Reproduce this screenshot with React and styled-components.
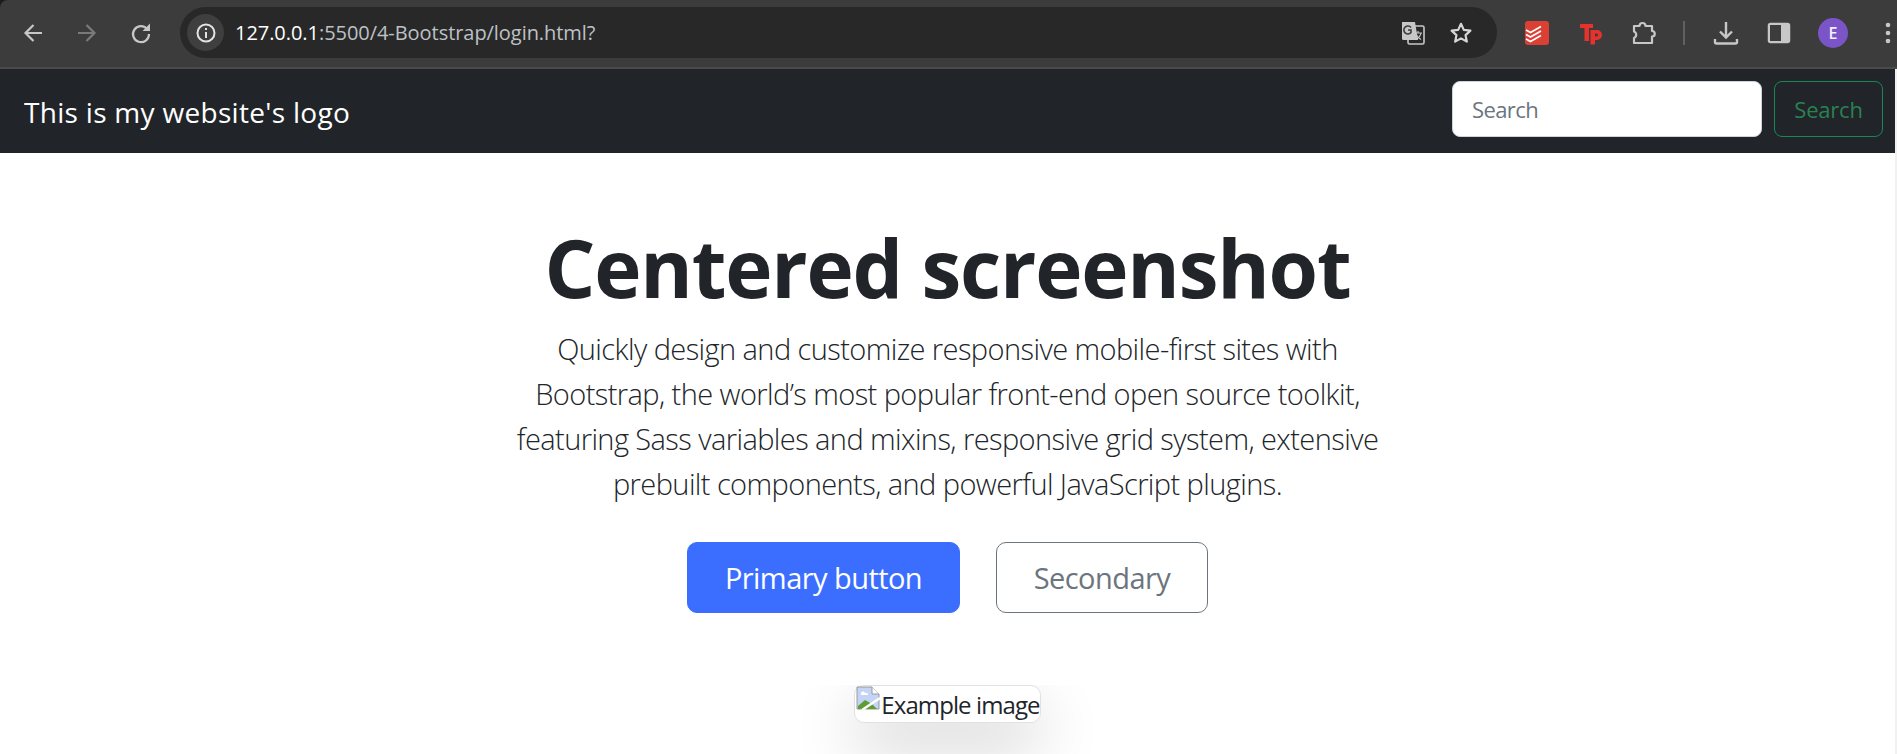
import React from 'react';
import styled, { createGlobalStyle } from 'styled-components';

const uiFont = `"Open Sans", "Noto Sans", "Liberation Sans", sans-serif`;

const GlobalStyle = createGlobalStyle`
  html, body {
    margin: 0;
    padding: 0;
    background: #fff;
    overflow: hidden;
  }
  * {
    box-sizing: border-box;
  }
`;

const Page = styled.div`
  width: 1897px;
  height: 754px;
  overflow: hidden;
  display: flex;
  flex-direction: column;
  background: #1c1c1c;
  font-family: ${uiFont};
  color: #212529;
`;

const BrowserBar = styled.div`
  height: 69px;
  flex: none;
  display: flex;
  align-items: center;
  background: #3c3c3c;
  border-bottom: 2px solid #4a4a4a;
  border-top-left-radius: 8px;
  padding: 0 0 2px 14px;
`;

const NavButton = styled.div`
  width: 38px;
  height: 38px;
  flex: none;
  margin-right: ${(p) => p.$gap}px;
  display: flex;
  align-items: center;
  justify-content: center;
  opacity: ${(p) => (p.$dim ? 0.45 : 1)};
`;

const Omnibox = styled.div`
  width: 1317px;
  height: 51px;
  flex: none;
  display: flex;
  align-items: center;
  background: #282828;
  border-radius: 26px;
  padding: 0 22px 0 7px;
`;

const InfoChip = styled.div`
  width: 37px;
  height: 37px;
  flex: none;
  border-radius: 50%;
  background: #3f3f3f;
  display: flex;
  align-items: center;
  justify-content: center;
`;

const UrlText = styled.div`
  flex: 1;
  margin-left: 11px;
  font-size: 20px;
  letter-spacing: -0.05px;
  color: #bdc1c6;
  white-space: nowrap;
`;

const UrlHost = styled.span`
  color: #fff;
`;

const OmniIcon = styled.div`
  width: 28px;
  height: 28px;
  flex: none;
  margin-left: ${(p) => p.$gap}px;
  display: flex;
  align-items: center;
  justify-content: center;
`;

const ExtensionArea = styled.div`
  display: flex;
  align-items: center;
  margin-left: 27px;
`;

const ExtIcon = styled.div`
  width: 26px;
  height: 26px;
  flex: none;
  margin-right: ${(p) => p.$gap}px;
  display: flex;
  align-items: center;
  justify-content: center;
`;

const Divider = styled.div`
  width: 2px;
  height: 24px;
  flex: none;
  background: #5f6060;
  margin-right: 28px;
`;

const Avatar = styled.div`
  width: 30px;
  height: 30px;
  flex: none;
  border-radius: 50%;
  background: #7b55c7;
  color: #f3eefc;
  font-size: 16px;
  font-weight: 600;
  display: flex;
  align-items: center;
  justify-content: center;
  margin-right: 36px;
`;

const Body = styled.div`
  flex: 1;
  min-height: 0;
  display: flex;
  background: #fff;
`;

const Content = styled.div`
  flex: 1;
  min-width: 0;
  display: flex;
  flex-direction: column;
  overflow: hidden;
`;

const ScrollTrack = styled.div`
  width: 2px;
  flex: none;
  background: #f1f1f1;
`;

const Navbar = styled.nav`
  height: 84px;
  flex: none;
  display: flex;
  align-items: center;
  justify-content: space-between;
  background: #212529;
  padding: 0 12px 0 24px;
`;

const Brand = styled.a`
  color: #fff;
  font-size: 28px;
  letter-spacing: 0.3px;
  padding-top: 2px;
`;

const SearchForm = styled.form`
  display: flex;
  gap: 12px;
  margin-bottom: 4px;
`;

const SearchInput = styled.input`
  width: 310px;
  height: 56px;
  border: 1px solid #ced4da;
  border-radius: 8px;
  background: #fff;
  padding: 0 19px;
  font-family: ${uiFont};
  font-size: 22px;
  letter-spacing: -0.6px;
  outline: none;
  &::placeholder {
    color: #6c757d;
    opacity: 1;
  }
`;

const SearchButton = styled.button`
  width: 109px;
  height: 56px;
  border: 1px solid #198754;
  border-radius: 8px;
  background: transparent;
  color: #2a8152;
  font-family: ${uiFont};
  font-size: 22px;
  letter-spacing: -0.2px;
  padding: 0;
`;

const Hero = styled.main`
  flex: 1;
  display: flex;
  flex-direction: column;
  align-items: center;
  padding-top: 66px;
  min-height: 0;
`;

const Heading = styled.h1`
  margin: 0;
  font-size: 80px;
  line-height: 96px;
  font-weight: 700;
  letter-spacing: -1.2px;
`;

const Lead = styled.p`
  margin: 11px 0 0;
  width: 880px;
  text-align: center;
  font-size: 29px;
  line-height: 45px;
  font-weight: 300;
  letter-spacing: -0.58px;
`;

const ButtonRow = styled.div`
  display: flex;
  gap: 36px;
  margin-top: 36px;
`;

const HeroButton = styled.button`
  height: 71px;
  width: ${(p) => p.$width}px;
  border-radius: 10px;
  border: 1px solid ${(p) => (p.$primary ? '#3b6eff' : '#6c757d')};
  background: ${(p) => (p.$primary ? '#3b6eff' : '#fff')};
  color: ${(p) => (p.$primary ? '#fff' : '#6c757d')};
  font-family: ${uiFont};
  font-size: 29px;
  letter-spacing: -0.55px;
  padding: 0;
`;

const Preview = styled.div`
  margin-top: 72px;
  flex: none;
  display: flex;
  align-items: center;
  height: 38px;
  border: 1px solid #dee2e6;
  border-radius: 10px;
  background: #fff;
  box-shadow: 0 24px 64px rgba(0, 0, 0, 0.2);
  clip-path: inset(0 -200px -200px -200px);
  font-size: 24px;
  letter-spacing: -0.9px;
  color: #212529;
  white-space: nowrap;
`;

const BrokenIcon = styled.svg`
  width: 24px;
  height: 24px;
  flex: none;
  align-self: flex-start;
  margin: 0 1px;
`;

export default function App() {
  return (
    <>
      <GlobalStyle />
      <Page>
        <BrowserBar>
          <NavButton $gap={16}>
            <svg width="24" height="24" viewBox="0 0 24 24" fill="none" stroke="#c7c7c7" strokeWidth="2.2">
              <path d="M21 12H4.500M12.500 4l-8 8 8 8" />
            </svg>
          </NavButton>
          <NavButton $gap={16} $dim>
            <svg width="24" height="24" viewBox="0 0 24 24" fill="none" stroke="#c7c7c7" strokeWidth="2.2">
              <path d="M3 12h16.500M11.500 4l8 8-8 8" />
            </svg>
          </NavButton>
          <NavButton $gap={20}>
            <svg width="24" height="24" viewBox="0 0 24 24" fill="none" stroke="#c7c7c7" strokeWidth="2.2">
              <path d="M18.500 8.500A8 8 0 1 0 20 13" />
              <path d="M21 2.500V10h-7.500z" fill="#c7c7c7" stroke="none" />
            </svg>
          </NavButton>
          <Omnibox>
            <InfoChip>
              <svg width="22" height="22" viewBox="0 0 22 22" fill="none" stroke="#e3e3e3" strokeWidth="2">
                <circle cx="11" cy="11" r="8.500" />
                <path d="M11 10v6M11 6v2" />
              </svg>
            </InfoChip>
            <UrlText>
              <UrlHost>127.0.0.1</UrlHost>:5500/4-Bootstrap/login.html?
            </UrlText>
            <OmniIcon $gap={0}>
              <svg width="26" height="26" viewBox="0 0 26 26">
                <rect x="8" y="6" width="16" height="18" rx="1.500" fill="none" stroke="#c7c7c7" strokeWidth="1.600" />
                <path d="M2 2h13l3 18H3.500A1.500 1.500 0 0 1 2 18.500z" fill="#c7c7c7" />
                <path d="M13 9.500a4 4 0 1 0 0 5v-2.500h-3" fill="none" stroke="#3c3c3c" strokeWidth="1.600" transform="translate(-2 -2)" />
                <path d="M15 13h7M18 11v2M21 13c-.6 3-2.400 5-5 6.500M16.500 15c1 2 2.500 3.500 4.500 4.500" fill="none" stroke="#c7c7c7" strokeWidth="1.200" />
              </svg>
            </OmniIcon>
            <OmniIcon $gap={20}>
              <svg width="26" height="26" viewBox="0 0 24 24" fill="none" stroke="#d6d6d6" strokeWidth="2" strokeLinejoin="round">
                <path d="M12 3.500l2.600 5.600 6.100.7-4.500 4.200 1.200 6-5.400-3-5.400 3 1.200-6-4.500-4.200 6.100-.7z" />
              </svg>
            </OmniIcon>
          </Omnibox>
          <ExtensionArea>
            <ExtIcon $gap={28}>
              <svg width="26" height="26" viewBox="0 0 26 26">
                <rect x="1" y="1" width="24" height="24" rx="3" fill="#db4035" />
                <path d="M2 10l4.500 2.500L17 6.500M2 14.500L6.500 17 17 11M2 19l4.500 2.500L17 15.500" fill="none" stroke="#fff" strokeWidth="1.700" />
              </svg>
            </ExtIcon>
            <ExtIcon $gap={27}>
              <svg width="24" height="24" viewBox="0 0 24 24" fill="#e5322d">
                <path d="M1 3h13v4h-4v13H5.500V7H1z" />
                <path d="M11.500 9h6.500a5 5 0 0 1 0 10h-2v4.500h-4.500zm4.500 3.500v3h1.500a1.500 1.500 0 0 0 0-3z" />
              </svg>
            </ExtIcon>
            <ExtIcon $gap={26}>
              <svg width="26" height="26" viewBox="0 0 26 26" fill="none" stroke="#c7c7c7" strokeWidth="2.200" strokeLinejoin="round">
                <path d="M3 6h5.500a3 3 0 0 1 6 0H21v5a2.500 2.500 0 0 1 0 5.500V23H3v-5a3.500 3.500 0 0 0 0-6.500z" />
              </svg>
            </ExtIcon>
            <Divider />
            <ExtIcon $gap={27}>
              <svg width="26" height="26" viewBox="0 0 26 26" fill="none" stroke="#c7c7c7" strokeWidth="2.400">
                <path d="M13 2v15M7 11.500l6 6 6-6M2 19v3a1.500 1.500 0 0 0 1.500 1.500h19A1.500 1.500 0 0 0 24 22v-3" />
              </svg>
            </ExtIcon>
            <ExtIcon $gap={26}>
              <svg width="24" height="24" viewBox="0 0 24 24">
                <rect x="1.500" y="2.500" width="21" height="19" rx="2" fill="#c7c7c7" stroke="#c7c7c7" strokeWidth="1.500" />
                <rect x="3" y="4" width="11" height="16" fill="#3c3c3c" />
              </svg>
            </ExtIcon>
            <Avatar>E</Avatar>
            <svg width="8" height="24" viewBox="0 0 8 24" fill="#c7c7c7">
              <circle cx="4" cy="4" r="2.300" />
              <circle cx="4" cy="12" r="2.300" />
              <circle cx="4" cy="20" r="2.300" />
            </svg>
          </ExtensionArea>
        </BrowserBar>
        <Body>
          <Content>
            <Navbar>
              <Brand>This is my website's logo</Brand>
              <SearchForm>
                <SearchInput placeholder="Search" />
                <SearchButton type="button">Search</SearchButton>
              </SearchForm>
            </Navbar>
            <Hero>
              <Heading>Centered screenshot</Heading>
              <Lead>
                Quickly design and customize responsive mobile-first sites with Bootstrap, the world’s most popular
                front-end open source toolkit, featuring Sass variables and mixins, responsive grid system, extensive
                prebuilt components, and powerful JavaScript plugins.
              </Lead>
              <ButtonRow>
                <HeroButton $primary $width={273}>Primary button</HeroButton>
                <HeroButton $width={212}>Secondary</HeroButton>
              </ButtonRow>
              <Preview>
                <BrokenIcon viewBox="0 0 24 24">
                  <path d="M1 1h15l7 7v15H1z" fill="#c3d4f7" stroke="#9a9a9a" />
                  <path d="M16 1v7h7" fill="#fff" stroke="#9a9a9a" />
                  <path d="M2 23v-3l7-6 7 4 5 5z" fill="#5c9e31" />
                  <path d="M5 8a2 2 0 0 1 4-1 2 2 0 0 1 3 2H5z" fill="#fff" />
                  <path d="M6 24L24 12" stroke="#fff" strokeWidth="2.500" />
                </BrokenIcon>
                Example image
              </Preview>
            </Hero>
          </Content>
          <ScrollTrack />
        </Body>
      </Page>
    </>
  );
}
